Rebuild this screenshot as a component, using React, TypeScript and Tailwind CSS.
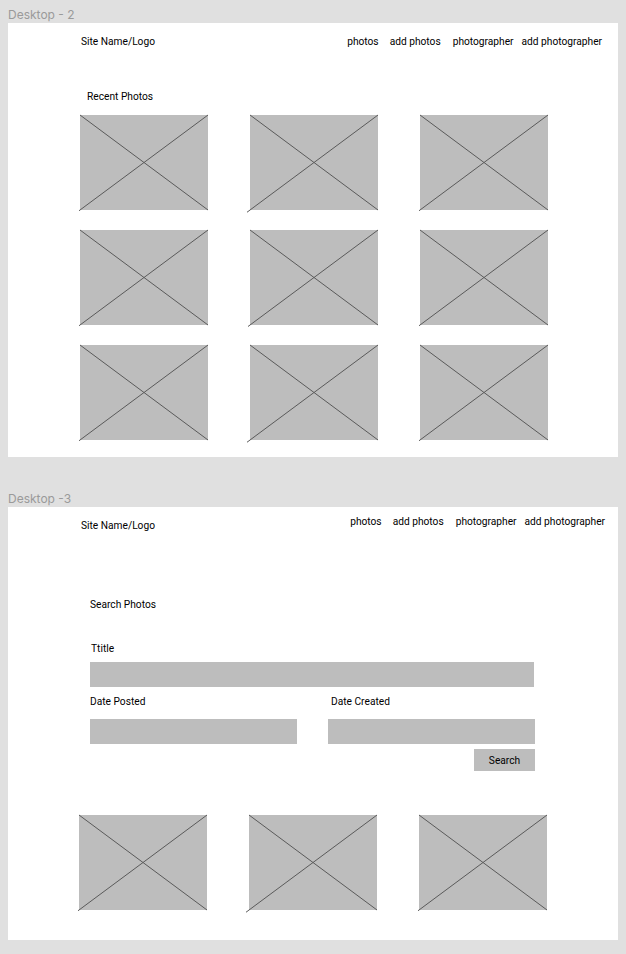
const navLinks = [
  { label: 'photos', gap: '' },
  { label: 'add photos', gap: 'ml-[11px]' },
  { label: 'photographer', gap: 'ml-[12px]' },
  { label: 'add photographer', gap: 'ml-[8px]' },
];

function Placeholder({ tail = 1 }: { tail?: number }) {
  return (
    <div className="relative h-[95px] w-[128px] bg-[#bdbdbd]">
      <svg className="absolute inset-0 overflow-visible" width="128" height="95" viewBox="0 0 128 95">
        <line x1="0" y1="0" x2="128" y2="95" stroke="#5a5a5a" strokeWidth="1" />
        <line x1="128" y1="0" x2={-tail} y2={95 + tail * 0.75} stroke="#5a5a5a" strokeWidth="1" />
      </svg>
    </div>
  );
}

function Header({ siteTop, navRight }: { siteTop: string; navRight: string }) {
  return (
    <div className="flex items-start justify-between pl-[73px]">
      <span className={siteTop}>Site Name/Logo</span>
      <nav className={`flex ${navRight}`}>
        {navLinks.map((l) => (
          <span key={l.label} className={l.gap}>
            {l.label}
          </span>
        ))}
      </nav>
    </div>
  );
}

function FrameLabel({ children }: { children: string }) {
  return (
    <div className="pl-[8px] text-[12px] leading-[16px] text-[#9a9a9a] [font-family:Inter,'Noto_Sans',sans-serif]">
      {children}
    </div>
  );
}

export default function App() {
  return (
    <div className="min-h-[954px] w-[626px] bg-[#e0e0e0] pt-[7px] text-[10.2px] leading-[13px] text-black [font-family:Roboto,'Liberation_Sans',sans-serif]">
      <FrameLabel>Desktop - 2</FrameLabel>
      <div className="ml-[8px] h-[434px] w-[610px] bg-white pt-[12px]">
        <Header siteTop="" navRight="pr-[16px]" />
        <div className="mt-[42px] pl-[79px]">Recent Photos</div>
        <div className="mt-[12px] grid grid-cols-[128px_128px_128px] gap-x-[42px] gap-y-[20px] pl-[72px]">
          <Placeholder tail={1} />
          <Placeholder tail={3} />
          <Placeholder tail={1} />
          <Placeholder tail={1} />
          <Placeholder tail={2} />
          <Placeholder tail={1} />
          <Placeholder tail={1} />
          <Placeholder tail={3} />
          <Placeholder tail={1} />
        </div>
      </div>

      <div className="mt-[34px]">
        <FrameLabel>Desktop -3</FrameLabel>
      </div>
      <div className="ml-[8px] h-[433px] w-[610px] bg-white pt-[8px]">
        <Header siteTop="mt-[4px]" navRight="pr-[13px]" />
        <div className="pl-[82px]">
          <div className="mt-[66px]">Search Photos</div>
          <div className="mt-[31px] pl-[1px]">Ttitle</div>
          <div className="mt-[7px] h-[25px] w-[444px] bg-[#bdbdbd]" />
          <div className="mt-[8px] flex w-[445px]">
            <div className="w-[241px]">Date Posted</div>
            <div>Date Created</div>
          </div>
          <div className="mt-[11px] flex w-[445px] justify-between">
            <div className="h-[25px] w-[207px] bg-[#bdbdbd]" />
            <div className="h-[25px] w-[207px] bg-[#bdbdbd]" />
          </div>
          <div className="mt-[5px] flex w-[445px] justify-end">
            <button className="h-[22px] w-[61px] bg-[#bdbdbd] text-center">Search</button>
          </div>
        </div>
        <div className="mt-[44px] grid grid-cols-[128px_128px_128px] gap-x-[42px] pl-[71px]">
          <Placeholder tail={1} />
          <Placeholder tail={3} />
          <Placeholder tail={1} />
        </div>
      </div>
    </div>
  );
}
